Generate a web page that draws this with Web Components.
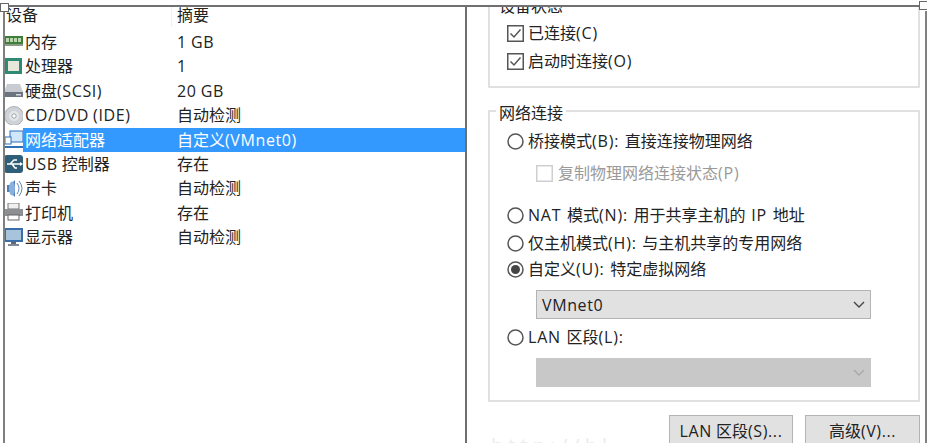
<!DOCTYPE html>
<html><head><meta charset="utf-8">
<style>
html,body{margin:0;padding:0;background:#fff;overflow:hidden}
</style></head><body>
<vm-settings></vm-settings>
<script>
const FONT='"Open Sans","Noto Sans CJK SC",sans-serif';
const L=(t,ls=.6)=>t.replace(/[\x21-\x7e]+/g,m=>`<span style="letter-spacing:${ls}px">${m}</span>`);
const icons={
mem:'<rect x="0" y="3" width="19" height="8" fill="#3f7d3a"/><path d="M2 5h3v4H2zM6 5h3v4H6zM10 5h3v4h-3zM14 5h3v4h-3z" fill="#b9d8ae"/><rect x="0" y="11" width="19" height="2" fill="#8a9a84"/>',
cpu:'<rect x="1" y="1" width="17" height="16" fill="#2f8a74"/><rect x="4" y="4" width="11" height="10" fill="#e6e8dc"/>',
hdd:'<path d="M3 3h13l3 8v5H0v-5z" fill="#c8ccd2"/><rect x="0" y="11" width="19" height="5" fill="#6c7480"/><rect x="12" y="13" width="5" height="1.5" fill="#d8dce0"/>',
cd:'<circle cx="10" cy="10" r="9.5" fill="#cfd3d8" stroke="#a8aeb4"/><circle cx="10" cy="10" r="5" fill="#e4e7ea"/><circle cx="10" cy="10" r="2.2" fill="#fff" stroke="#9aa2a8"/>',
net:'<rect x="6" y="1" width="13" height="11" fill="#cfe6fb" stroke="#2f6fb8"/><rect x="1" y="7" width="6" height="7" fill="#fff" stroke="#2f6fb8"/><path d="M0 17h19" stroke="#2f6fb8" stroke-width="2"/>',
usb:'<rect x="0" y="0" width="19" height="18" rx="3" fill="#2f5f78"/><path d="M3 9h13M6 9l4-4h3M8 9l3 4h2" stroke="#fff" stroke-width="1.5" fill="none"/><path d="M16 7l3 2-3 2z" fill="#fff"/>',
snd:'<path d="M3 6h3l5-5v17l-5-5H3z" fill="#4f7fb8"/><ellipse cx="8" cy="9.500" rx="3" ry="7" fill="#8ab0dc"/><path d="M13 4q4 5.500 0 11M15 2q6 7.500 0 15" stroke="#5b86b8" fill="none"/>',
prn:'<rect x="4" y="0" width="11" height="6" fill="#f0f0f0" stroke="#777"/><rect x="0" y="6" width="19" height="7" fill="#8d8f92"/><rect x="4" y="12" width="11" height="5" fill="#fff" stroke="#666"/>',
mon:'<rect x="0" y="0" width="19" height="14" fill="#3a6ea8"/><rect x="2" y="2" width="15" height="10" fill="#a8c4dc"/><rect x="7" y="14" width="5" height="2" fill="#667"/><rect x="4" y="16" width="11" height="2" fill="#7f8a94"/>'
};
class DevRow extends HTMLElement{
 connectedCallback(){
  const s=this.attachShadow({mode:'open'});
  s.innerHTML=`<style>
  :host{display:grid;grid-template-columns:19px 154px 1fr;height:24.4px;align-items:center;color:#222;font:16px/24px ${FONT};padding-left:1px}
  svg{width:19px;height:19px;display:block}
  .n{height:100%;line-height:24px;padding-left:2px;white-space:nowrap}
  .v{height:100%;line-height:24px;white-space:nowrap}
  :host([selected]){color:#fff}
  :host([selected]) .n,:host([selected]) .v{background:#3399ff}
  </style><svg viewBox="0 0 19 19">${icons[this.getAttribute('icon')]}</svg><div class="n">${L(this.getAttribute('name'))}</div><div class="v">${L(this.getAttribute('val'))}</div>`;
 }
}
customElements.define('dev-row',DevRow);
class DevList extends HTMLElement{
 connectedCallback(){
  const s=this.attachShadow({mode:'open'});
  s.innerHTML=`<style>
  :host{display:block;width:462px;flex:none;border-right:2px solid #6e6e6e;font:16px ${FONT};box-sizing:content-box;overflow:hidden}
  .head{display:grid;grid-template-columns:165px 1fr;height:23px;line-height:16px;color:#222;padding-left:3px;box-sizing:border-box}
  .head span+span{border-left:1px solid #f0f0f0;padding-left:5px;height:20px}
  </style><div class="head"><span>设备</span><span>摘要</span></div><slot></slot>`;
 }
}
customElements.define('dev-list',DevList);
class GroupBox extends HTMLElement{
 connectedCallback(){
  const s=this.attachShadow({mode:'open'});
  s.innerHTML=`<style>
  :host{display:block;position:relative;border:2px solid #e0e0e0;border-radius:1px;box-sizing:border-box;font:16px/24px ${FONT};color:#222}
  .t{position:absolute;left:6px;top:-9px;background:#fff;padding:0 3px;line-height:20px;white-space:nowrap}
  </style><div class="t">${this.getAttribute('label')}</div><slot></slot>`;
 }
}
customElements.define('group-box',GroupBox);
class OptRow extends HTMLElement{
 connectedCallback(){
  const kind=this.getAttribute('kind');
  const dis=this.hasAttribute('disabled');
  const on=this.hasAttribute('on');
  const stroke=dis?'#cfcfcf':'#555';
  let g='';
  if(kind==='check') g=`<rect x=".75" y=".75" width="15.5" height="15.500" fill="#fff" stroke="${stroke}" stroke-width="1.5"/>`+(on?`<path d="M3.500 8.500l3.500 3.500 6.500-7.500" fill="none" stroke="#555" stroke-width="1.500"/>`:'');
  else g=`<circle cx="8.500" cy="8.500" r="7.500" fill="#fff" stroke="${stroke}" stroke-width="1.500"/>`+(on?`<circle cx="8.500" cy="8.500" r="4.500" fill="#444"/>`:'');
  const s=this.attachShadow({mode:'open'});
  s.innerHTML=`<style>
  :host{display:flex;align-items:center;gap:4px;height:28px;white-space:nowrap;word-spacing:1.5px;color:${dis?'#9a9a9a':'#222'};font:16px/24px ${FONT}}
  svg{width:17px;height:17px;flex:none}
  </style><svg viewBox="0 0 17 17">${g}</svg><span>${L(this.textContent,.8)}</span>`;
 }
}
customElements.define('opt-row',OptRow);
class NetSelect extends HTMLElement{
 connectedCallback(){
  const dis=this.hasAttribute('disabled');
  const s=this.attachShadow({mode:'open'});
  s.innerHTML=`<style>
  :host{display:flex;align-items:center;justify-content:space-between;box-sizing:border-box;width:335px;height:29px;margin-left:29px;padding:0 5px 0 5px;
   background:${dis?'#c8c8c8':'#e1e1e1'};border:1px solid ${dis?'#c8c8c8':'#b4b4b4'};font:16px/24px ${FONT};color:#222}
  svg{width:12px;height:8px}
  </style><span>${L(this.textContent)}</span><svg viewBox="0 0 12 8"><path d="M1 1l5 5 5-5" fill="none" stroke="${dis?'#a8a8a8':'#444'}" stroke-width="1.400"/></svg>`;
 }
}
customElements.define('net-select',NetSelect);
class DlgBtn extends HTMLElement{
 connectedCallback(){
  const s=this.attachShadow({mode:'open'});
  s.innerHTML=`<style>
  :host{display:flex;justify-content:center;align-items:center;box-sizing:border-box;height:32px;background:#e1e1e1;border:1px solid #b4b4b4;font:16px/24px ${FONT};color:#222;white-space:nowrap}
  </style><span>${L(this.textContent)}</span>`;
 }
}
customElements.define('dlg-btn',DlgBtn);
class VmSettings extends HTMLElement{
 connectedCallback(){
  const s=this.attachShadow({mode:'open'});
  s.innerHTML=`<style>
  :host{display:block;position:relative;width:927px;height:443px;overflow:hidden;background:#fff;box-sizing:border-box;padding-top:5px;font:16px ${FONT}}
  .frame{display:flex;height:438px;border-top:2px solid #707070;margin-right:7px;box-sizing:border-box;overflow:hidden}
  .left{padding-left:3px;display:flex}
  .right{flex:1;padding:0 0 0 21px;margin-top:-4px;min-width:0}
  .g1{height:85px;padding:14px 0 0 17px}
  .g2{height:292px;margin-top:22px;padding:15px 0 0 17px}
  .btns{display:flex;justify-content:flex-end;gap:12px;margin-top:13px}
  .h{position:absolute;box-sizing:border-box;width:9px;height:9px;border:1.500px solid #666;background:#fff}
  .line{position:absolute;background:#808080;width:2px}
  .mark{position:absolute;left:491px;top:432px;color:#ececec;font:20px "Open Sans",sans-serif;letter-spacing:5px}
  </style>
  <div class="frame">
   <div class="left"><slot name="list"></slot></div>
   <div class="right">
    <group-box class="g1" label="设备状态"><slot name="status"></slot></group-box>
    <group-box class="g2" label="网络连接"><slot name="net"></slot></group-box>
    <div class="btns"><slot name="btns"></slot></div>
   </div>
  </div>
  <div class="line" style="left:3px;top:11px;height:432px"></div>
  <div class="line" style="left:925px;top:11px;height:432px"></div>
  <div class="h" style="left:0;top:3px"></div>
  <div class="h" style="left:919px;top:1px"></div>
  <div class="mark">http://bl</div>`;
 }
}
customElements.define('vm-settings',VmSettings);
const root=document.querySelector('vm-settings');
root.innerHTML=`
<dev-list slot="list">
 <dev-row icon="mem" name="内存" val="1 GB"></dev-row>
 <dev-row icon="cpu" name="处理器" val="1"></dev-row>
 <dev-row icon="hdd" name="硬盘(SCSI)" val="20 GB"></dev-row>
 <dev-row icon="cd" name="CD/DVD (IDE)" val="自动检测"></dev-row>
 <dev-row icon="net" name="网络适配器" val="自定义(VMnet0)" selected></dev-row>
 <dev-row icon="usb" name="USB 控制器" val="存在"></dev-row>
 <dev-row icon="snd" name="声卡" val="自动检测"></dev-row>
 <dev-row icon="prn" name="打印机" val="存在"></dev-row>
 <dev-row icon="mon" name="显示器" val="自动检测"></dev-row>
</dev-list>
<div slot="status">
 <opt-row kind="check" on>已连接(C)</opt-row>
 <opt-row kind="check" on>启动时连接(O)</opt-row>
</div>
<div slot="net">
 <opt-row kind="radio">桥接模式(B): 直接连接物理网络</opt-row>
 <opt-row kind="check" disabled style="margin:4px 0 14px 29px;gap:5px">复制物理网络连接状态(P)</opt-row>
 <opt-row kind="radio">NAT 模式(N): 用于共享主机的 IP 地址</opt-row>
 <opt-row kind="radio">仅主机模式(H): 与主机共享的专用网络</opt-row>
 <opt-row kind="radio" on style="margin-top:-2px">自定义(U): 特定虚拟网络</opt-row>
 <net-select style="margin-top:7px">VMnet0</net-select>
 <opt-row kind="radio" style="margin-top:4px">LAN 区段(L):</opt-row>
 <net-select disabled style="margin-top:7px"></net-select>
</div>
<dlg-btn slot="btns" style="width:124px">LAN 区段(S)...</dlg-btn>
<dlg-btn slot="btns" style="width:115px">高级(V)...</dlg-btn>`;
</script>
</body></html>
